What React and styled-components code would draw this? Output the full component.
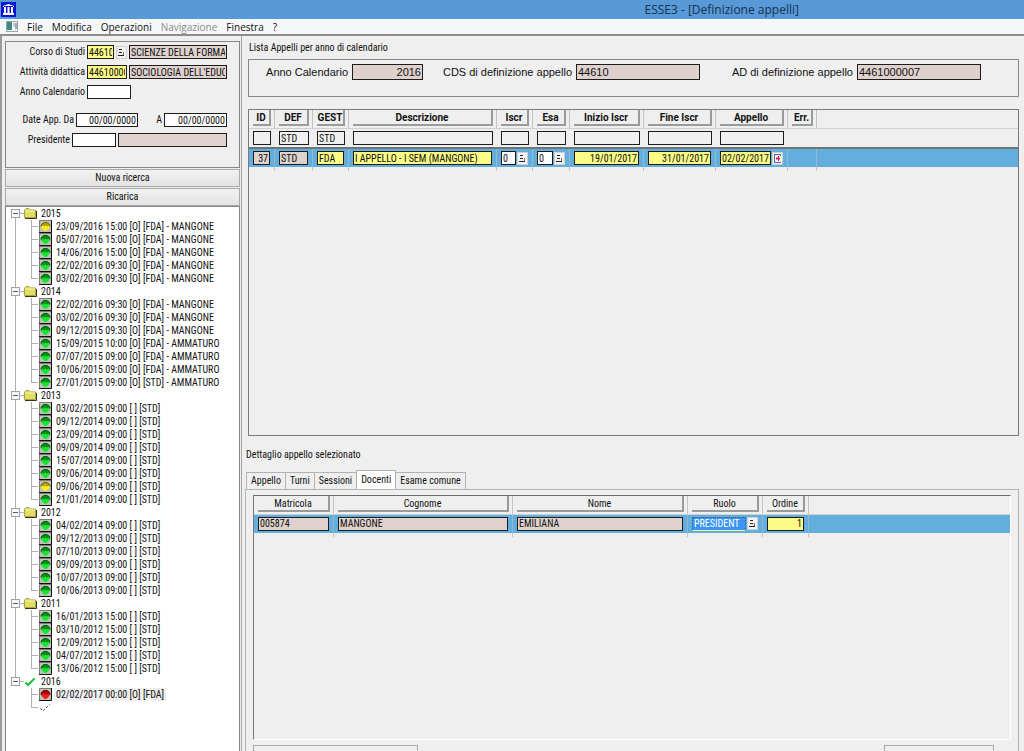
import React from "react";
import styled, { createGlobalStyle, css } from "styled-components";

const GlobalStyle = createGlobalStyle`
  * {
    box-sizing: border-box;
  }
  body {
    margin: 0;
    background: #efefef;
    color: #111;
    font-family: "Roboto Condensed", "Liberation Sans", sans-serif;
    font-size: 10px;
  }
  input, button {
    font: inherit;
    color: inherit;
    border-radius: 0;
    outline: none;
  }
`;

// DATA
const menu = ["File", "Modifica", "Operazioni", "Navigazione", "Finestra", "?"];

const M = " - MANGONE";
const A = " - AMMATURO";
const tree = [
  { year: "2015", icon: "folder", items: [
    ["yellow", "23/09/2016 15:00 [O] [FDA]" + M],
    ["green", "05/07/2016 15:00 [O] [FDA]" + M],
    ["green", "14/06/2016 15:00 [O] [FDA]" + M],
    ["green", "22/02/2016 09:30 [O] [FDA]" + M],
    ["green", "03/02/2016 09:30 [O] [FDA]" + M],
  ] },
  { year: "2014", icon: "folder", items: [
    ["green", "22/02/2016 09:30 [O] [FDA]" + M],
    ["green", "03/02/2016 09:30 [O] [FDA]" + M],
    ["green", "09/12/2015 09:30 [O] [FDA]" + M],
    ["green", "15/09/2015 10:00 [O] [FDA]" + A],
    ["green", "07/07/2015 09:00 [O] [FDA]" + A],
    ["green", "10/06/2015 09:00 [O] [FDA]" + A],
    ["green", "27/01/2015 09:00 [O] [STD]" + A],
  ] },
  { year: "2013", icon: "folder", items: [
    ["green", "03/02/2015 09:00 [ ] [STD]"],
    ["green", "09/12/2014 09:00 [ ] [STD]"],
    ["green", "23/09/2014 09:00 [ ] [STD]"],
    ["green", "09/09/2014 09:00 [ ] [STD]"],
    ["green", "15/07/2014 09:00 [ ] [STD]"],
    ["green", "09/06/2014 09:00 [ ] [STD]"],
    ["yellow", "09/06/2014 09:00 [ ] [STD]"],
    ["green", "21/01/2014 09:00 [ ] [STD]"],
  ] },
  { year: "2012", icon: "folder", items: [
    ["green", "04/02/2014 09:00 [ ] [STD]"],
    ["green", "09/12/2013 09:00 [ ] [STD]"],
    ["green", "07/10/2013 09:00 [ ] [STD]"],
    ["green", "09/09/2013 09:00 [ ] [STD]"],
    ["green", "10/07/2013 09:00 [ ] [STD]"],
    ["green", "10/06/2013 09:00 [ ] [STD]"],
  ] },
  { year: "2011", icon: "folder", items: [
    ["green", "16/01/2013 15:00 [ ] [STD]"],
    ["green", "03/10/2012 15:00 [ ] [STD]"],
    ["green", "12/09/2012 15:00 [ ] [STD]"],
    ["green", "04/07/2012 15:00 [ ] [STD]"],
    ["green", "13/06/2012 15:00 [ ] [STD]"],
  ] },
  { year: "2016", icon: "check", items: [
    ["red", "02/02/2017 00:00 [O] [FDA]", true],
    ["draft", ""],
  ] },
];

const appelliCols = [
  { name: "ID", w: 26, value: "37", tone: "rose", right: true, filter: "" },
  { name: "DEF", w: 38, value: "STD", tone: "rose", filter: "STD" },
  { name: "GEST", w: 36, value: "FDA", tone: "yellow", filter: "STD" },
  { name: "Descrizione", w: 148, value: "I APPELLO - I SEM (MANGONE)", tone: "yellow", filter: "" },
  { name: "Iscr", w: 36, value: "0", tone: "white", pick: "list", filter: "" },
  { name: "Esa", w: 37, value: "0", tone: "white", pick: "list", filter: "" },
  { name: "Inizio Iscr", w: 74, value: "19/01/2017", tone: "yellow", right: true, filter: "" },
  { name: "Fine Iscr", w: 72, value: "31/01/2017", tone: "yellow", right: true, filter: "" },
  { name: "Appello", w: 72, value: "02/02/2017", tone: "yellow", pick: "date", filter: "" },
  { name: "Err.", w: 29 },
];

const docentiCols = [
  { name: "Matricola", w: 80, value: "005874", tone: "rose" },
  { name: "Cognome", w: 179, value: "MANGONE", tone: "rose" },
  { name: "Nome", w: 175, value: "EMILIANA", tone: "rose" },
  { name: "Ruolo", w: 75, value: "PRESIDENT", tone: "selected", pick: "list" },
  { name: "Ordine", w: 46, value: "1", tone: "yellow", right: true },
];

const tabs = ["Appello", "Turni", "Sessioni", "Docenti", "Esame comune"];

// ICONS
const AppIcon = () => (
  <svg width="15" height="15" viewBox="0 0 15 15" aria-hidden="true">
    <rect width="15" height="15" fill="#0a14d8" />
    <path d="M2 5V4l5.500-2L13 4v1zM3 5h2v6H3zM6.500 5h2v6h-2zM10 5h2v6h-2zM2 11h11v2H2z" fill="#fff" />
    <path d="M3 4.500h9" stroke="#0a14d8" />
  </svg>
);

const WindowIcon = () => (
  <svg width="12" height="11" viewBox="0 0 12 11" aria-hidden="true">
    <rect x=".5" y=".5" width="11" height="10" fill="#f8fafa" stroke="#9aa6aa" />
    <rect x="1" y="1" width="5" height="8" fill="#3d8c84" />
    <path d="M7 3h2M7 5h2" stroke="#8ab" />
    <path d="M10 2v6" stroke="#456" />
  </svg>
);

const FolderIcon = () => (
  <svg width="13" height="11" viewBox="0 0 13 11" aria-hidden="true">
    <path d="M.5 9.500V2L2 .5h3L6.500 2h5v7.500z" fill="#e2de62" stroke="#a8a348" />
    <path d="M1.500 3h9.500" stroke="#f6f4b4" />
    <path d="M1 10.500h11.500V3" stroke="#33331a" fill="none" />
  </svg>
);

const balls = {
  green: ["#14e62e", "#0c8a1c", "#064d0e"],
  yellow: ["#ffec1c", "#b39f10", "#5c5206"],
  red: ["#f41a1a", "#a80c0c", "#560404"],
};

const BallIcon = ({ color }) => (
  <svg width="13" height="13" viewBox="0 0 13 13" aria-hidden="true">
    <rect width="13" height="13" fill="#c0c0b8" />
    <path d="M0 12.500h12.500V0" stroke="#111" fill="none" />
    <path d="M.5 12V.5H12" stroke="#7c7c76" fill="none" />
    <path d="M2 6a4.500 4 0 0 1 9 0v1L8 10.500 6.500 11 5 10.500 2 7z" fill={balls[color][0]} />
    <path d="M2 6.500a4.500 4 0 0 1 9 0L9.500 5.500 8 6.500 6.500 5.500 5 6.500 3.500 5.500z" fill={balls[color][1]} />
    <path d="M2 6.500a4.500 4 0 0 1 9 0" stroke={balls[color][2]} fill="none" />
  </svg>
);

const CheckIcon = ({ draft }) => (
  <svg width="13" height="11" viewBox="0 0 13 11" aria-hidden="true">
    <path
      d="M1.500 6.500L4 9l2.500-2.500L10.500 2.500"
      fill="none"
      stroke={draft ? "#222" : "#16c832"}
      strokeWidth={draft ? 1 : 2}
      strokeDasharray={draft ? "2 2" : "none"}
    />
  </svg>
);

const MinusIcon = () => (
  <svg width="9" height="9" viewBox="0 0 9 9" aria-hidden="true">
    <rect x=".5" y=".5" width="8" height="8" fill="#fafafa" stroke="#a0a0a0" />
    <path d="M2 4.500h5" stroke="#4a5a9a" />
  </svg>
);

const ListIcon = () => (
  <svg width="9" height="11" viewBox="0 0 9 11" aria-hidden="true">
    <path d="M2 2.500h3M2 5.500h3M1 8.500h6" stroke="#222" />
    <path d="M6.500 5v3" stroke="#777" />
  </svg>
);

const DateIcon = () => (
  <svg width="9" height="11" viewBox="0 0 9 11" aria-hidden="true">
    <path d="M1.500 1v9M1 1.500h7M1 9.500h7M7.500 1v2" stroke="#5c62b0" fill="none" />
    <path d="M3 5.500h4" stroke="#d02c40" strokeWidth="2" />
    <path d="M5.500 3v5" stroke="#d02c40" />
  </svg>
);

// PARTS
const Picker = ({ kind, label }) => (
  <PickButton type="button" aria-label={label}>
    {kind === "date" ? <DateIcon /> : <ListIcon />}
  </PickButton>
);

const Group = ({ year, icon, items, last }) => (
  <li>
    <TreeRow>
      <Expander type="button" aria-label={"Chiudi " + year} $first={year === "2015"} $last={last}>
        <MinusIcon />
      </Expander>
      <Dash />
      {icon === "folder" ? <FolderIcon /> : <CheckIcon />}
      <YearName>{year}</YearName>
    </TreeRow>
    <TreeList>
      {items.map(([color, text, active], i) => (
        <TreeRow key={i}>
          <RootGuide $hidden={last} />
          <Branch $end={i === items.length - 1} />
          {color === "draft" ? <CheckIcon draft /> : <BallIcon color={color} />}
          <ItemName $active={active}>{text}</ItemName>
        </TreeRow>
      ))}
    </TreeList>
  </li>
);

const DataGrid = ({ cols, filters, bold, label }) => (
  <Grid aria-label={label}>
    <colgroup>
      {cols.map((c) => <Col key={c.name} $w={c.w} />)}
      <col />
    </colgroup>
    <thead>
      <tr>
        {cols.map((c) => (
          <HeadCell key={c.name} $bold={bold}><HeadLabel>{c.name}</HeadLabel></HeadCell>
        ))}
        <HeadCell as="td" $blank />
      </tr>
      {filters && (
        <tr>
          {cols.map((c) => (
            <FilterCell key={c.name}>
              {c.filter !== undefined && (
                <Field $tone="plain" defaultValue={c.filter} aria-label={"Filtro " + c.name} />
              )}
            </FilterCell>
          ))}
          <FilterCell />
        </tr>
      )}
    </thead>
    <tbody>
      <tr>
        {cols.map((c) => (
          <BodyCell key={c.name}>
            {c.value && (
              <CellBox>
                <Field $tone={c.tone} $right={c.right} defaultValue={c.value} aria-label={c.name} />
                {c.pick && <Picker kind={c.pick} label={"Scegli " + c.name} />}
              </CellBox>
            )}
          </BodyCell>
        ))}
        <BodyCell $blank />
      </tr>
      <tr>
        {cols.map((c) => <TailCell key={c.name} />)}
        <td />
      </tr>
    </tbody>
  </Grid>
);

export default function App() {
  const [tab, setTab] = React.useState("Docenti");

  return (
    <Window>
      <GlobalStyle />
      <TitleBar>
        <AppIcon />
        <Title>ESSE3 - [Definizione appelli]</Title>
      </TitleBar>
      <MenuBar>
        <WindowIcon />
        {menu.map((m) => (
          <MenuItem key={m} type="button" disabled={m === "Navigazione"}>{m}</MenuItem>
        ))}
      </MenuBar>

      <Workspace>
        <Sidebar>
          <SearchForm>
            <FormGroup>
              <FormRow>
                <FormLabel htmlFor="corso" $w={78}>Corso di Studi</FormLabel>
                <Field id="corso" $tone="yellow" $w={27} defaultValue="44610" />
                <Picker kind="list" label="Scegli corso" />
                <Field $tone="rose" readOnly value="SCIENZE DELLA FORMAZIONE" aria-label="Nome corso" />
              </FormRow>
              <FormRow>
                <FormLabel htmlFor="attivita" $w={78}>Attività didattica</FormLabel>
                <Field id="attivita" $tone="yellow" $w={40} defaultValue="4461000007" />
                <Field $tone="rose" readOnly value="SOCIOLOGIA DELL'EDUCAZIONE" aria-label="Nome attività" />
              </FormRow>
              <FormRow>
                <FormLabel htmlFor="anno" $w={78}>Anno Calendario</FormLabel>
                <Field id="anno" $tone="white" $w={44} />
              </FormRow>
            </FormGroup>
            <FormGroup>
              <FormRow>
                <FormLabel htmlFor="da" $w={67}>Date App. Da</FormLabel>
                <Field id="da" $tone="white" $w={62} $right defaultValue="00/00/0000" />
                <FormLabel htmlFor="al" $w={22}>A</FormLabel>
                <Field id="al" $tone="white" $right defaultValue="00/00/0000" />
              </FormRow>
              <FormRow>
                <FormLabel htmlFor="presidente" $w={63}>Presidente</FormLabel>
                <Field id="presidente" $tone="white" $w={44} />
                <Field $tone="rose" readOnly aria-label="Nome presidente" />
              </FormRow>
            </FormGroup>
          </SearchForm>
          <WideButton type="button">Nuova ricerca</WideButton>
          <WideButton type="button">Ricarica</WideButton>
          <TreePanel>
            <TreeList>
              {tree.map((g, i) => <Group key={g.year} {...g} last={i === tree.length - 1} />)}
            </TreeList>
          </TreePanel>
        </Sidebar>

        <Main>
          <Upper>
            <Caption>Lista Appelli per anno di calendario</Caption>
            <Summary>
              <SummaryLabel htmlFor="s-anno" $w={101}>Anno Calendario</SummaryLabel>
              <SummaryField id="s-anno" $w={71} $right readOnly value="2016" />
              <SummaryLabel htmlFor="s-cds" $w={149}>CDS di definizione appello</SummaryLabel>
              <SummaryField id="s-cds" $w={124} readOnly value="44610" />
              <SummaryLabel htmlFor="s-ad" $w={153}>AD di definizione appello</SummaryLabel>
              <SummaryField id="s-ad" $w={124} readOnly value="4461000007" />
            </Summary>
            <GridBox>
              <DataGrid cols={appelliCols} filters bold label="Lista appelli" />
            </GridBox>
          </Upper>

          <Lower>
            <Caption>Dettaglio appello selezionato</Caption>
            <TabList role="tablist">
              {tabs.map((t) => (
                <Tab key={t} type="button" role="tab" aria-selected={t === tab} $active={t === tab} onClick={() => setTab(t)}>
                  {t}
                </Tab>
              ))}
            </TabList>
            <TabPanel role="tabpanel">
              <DetailBox>
                <DataGrid cols={docentiCols} label="Docenti" />
              </DetailBox>
              <Footer>
                <FooterBox $w={165} />
                <FooterBox $w={110} />
              </Footer>
            </TabPanel>
          </Lower>
        </Main>
      </Workspace>
    </Window>
  );
}

// ______________________________________ STYLED COMPONENTS
const tones = {
  rose: "#ded1ce",
  yellow: "#fbfb86",
  white: "#fff",
  plain: "#f0f0f0",
  selected: "#3b95f2",
};

const Window = styled.div`
  display: flex;
  flex-direction: column;
  height: 100vh;
  overflow: hidden;
`

const TitleBar = styled.header`
  display: flex;
  align-items: center;
  justify-content: space-between;
  height: 19px;
  padding-left: 1px;
  background: #5899d8;
`

const Title = styled.h1`
  margin: 0 22% 0 0;
  font: 400 12px/18px "Open Sans", sans-serif;
  color: #17324e;
`

const MenuBar = styled.nav`
  display: flex;
  align-items: center;
  gap: 9px;
  height: 17px;
  padding-left: 6px;
  background: #f6f7f9;
  border-bottom: 2px solid #8c8c8c;
`

const MenuItem = styled.button`
  padding: 0;
  border: 0;
  background: none;
  font: 10px/14px "Open Sans", sans-serif;
  color: #111;
  &:disabled {
    color: #8b8b8b;
  }
`

const Workspace = styled.div`
  display: flex;
  flex: 1;
  min-height: 0;
  border-left: 2px solid #9c9c9c;
`

const Sidebar = styled.aside`
  display: flex;
  flex-direction: column;
  flex: none;
  width: 240px;
  padding: 5px 1px 0 3px;
  border-right: 1px solid #a4a4a4;
`

const SearchForm = styled.form`
  display: flex;
  flex-direction: column;
  gap: 14px;
  height: 127px;
  padding: 3px 12px 0 1px;
  border: 1px solid #868686;
`

const FormGroup = styled.div`
  display: flex;
  flex-direction: column;
  gap: 6px;
`

const FormRow = styled.div`
  display: flex;
  align-items: center;
  gap: 2px;
  height: 14px;
`

const FormLabel = styled.label`
  flex: none;
  width: ${(p) => p.$w}px;
  line-height: 14px;
  text-align: right;
  white-space: nowrap;
`

const Field = styled.input`
  flex: ${(p) => (p.$w ? "none" : "1")};
  width: ${(p) => (p.$w ? p.$w + "px" : "100%")};
  min-width: 0;
  height: 14px;
  margin: 0;
  padding: 0 1px;
  border: 1px solid #1c1c1c;
  background: ${(p) => tones[p.$tone]};
  line-height: 12px;
  text-align: ${(p) => (p.$right ? "right" : "left")};
  ${(p) => p.$tone === "selected" && css`
    color: #fff;
    border: 1px dotted #3c5f80;
    border-bottom: 1px solid #f4f48c;
  `}
`

const PickButton = styled.button`
  display: flex;
  align-items: center;
  justify-content: center;
  flex: none;
  width: 11px;
  height: 13px;
  padding: 0;
  border: 1px solid #cfcfcf;
  background: #f3f3f3;
`

const WideButton = styled.button`
  flex: none;
  height: 18px;
  margin-top: 1px;
  padding: 0;
  border: 1px solid #a9a9a9;
  background: linear-gradient(#f2f2f2, #e3e3e3);
  line-height: 16px;
`

const TreePanel = styled.div`
  flex: 1;
  min-height: 0;
  overflow: hidden;
  padding-left: 5px;
  border: 1px solid #868686;
  border-bottom: 0;
  background: #fff;
`

const TreeList = styled.ul`
  margin: 0;
  padding: 0;
  list-style: none;
`

const TreeRow = styled.div`
  display: flex;
  align-items: center;
  height: 13px;
  line-height: 13px;
  white-space: nowrap;
`

const line = "linear-gradient(#b0b0b0, #b0b0b0) no-repeat";

const Expander = styled.button`
  display: flex;
  align-items: center;
  width: 9px;
  height: 13px;
  padding: 0;
  border: 0;
  background: ${line} 4px ${(p) => (p.$first ? "100%" : "0")} / 1px ${(p) => (p.$first || p.$last ? "50%" : "100%")};
`

const Dash = styled.span`
  width: 4px;
  height: 1px;
  background: #b0b0b0;
`

const RootGuide = styled.span`
  width: 20px;
  height: 13px;
  background: ${(p) => (p.$hidden ? "none" : css`${line} 4px 0 / 1px 100%`)};
`

const Branch = styled.span`
  width: 8px;
  height: 13px;
  background:
    ${line} 0 0 / 1px ${(p) => (p.$end ? "50%" : "100%")},
    ${line} 0 6px / 7px 1px;
`

const YearName = styled.span`
  padding-left: 4px;
`

const ItemName = styled.span`
  margin-left: 2px;
  padding: 0 2px;
  background: ${(p) => (p.$active ? "#f0f0f0" : "none")};
`

const Main = styled.main`
  display: flex;
  flex-direction: column;
  flex: 1;
  min-width: 0;
  padding: 5px 5px 0 3px;
`

const Upper = styled.section`
  display: flex;
  flex-direction: column;
  flex: 402 1 0;
  min-height: 0;
  padding-left: 3px;
`

const Lower = styled.section`
  display: flex;
  flex-direction: column;
  flex: 309 1 0;
  min-height: 0;
  padding-top: 12px;
`

const Caption = styled.h2`
  margin: 0;
  padding-left: 1px;
  font-size: 10px;
  font-weight: 400;
  line-height: 14px;
`

const Summary = styled.div`
  display: flex;
  align-items: flex-start;
  gap: 2px;
  height: 38px;
  margin: 4px 0 12px;
  padding-top: 4px;
  border: 1px solid #868686;
`

const SummaryLabel = styled.label`
  flex: none;
  width: ${(p) => p.$w}px;
  padding-right: 2px;
  font: 11px/16px "Liberation Sans", sans-serif;
  text-align: right;
  white-space: nowrap;
`

const SummaryField = styled(Field)`
  height: 16px;
  background: ${tones.rose};
  font: 11px/14px "Liberation Sans", sans-serif;
`

const GridBox = styled.div`
  flex: 1;
  min-height: 0;
  overflow: hidden;
  border: 1px solid #7a7a7a;
`

const Grid = styled.table`
  width: 100%;
  table-layout: fixed;
  border-collapse: separate;
  border-spacing: 0;
`

const Col = styled.col`
  width: ${(p) => p.$w}px;
`

const HeadCell = styled.th`
  height: 19px;
  padding: 0 3px 2px 4px;
  border-right: ${(p) => (p.$blank ? "0" : "1px solid #c4c4c4")};
  border-bottom: 1px solid #d0d0d0;
  font-family: ${(p) => (p.$bold ? "Roboto, sans-serif" : "inherit")};
  font-weight: ${(p) => (p.$bold ? 700 : 400)};
`

const HeadLabel = styled.div`
  height: 16px;
  border-right: 2px solid #9a9a9a;
  border-bottom: 2px solid #9a9a9a;
  line-height: 16px;
  text-align: center;
  white-space: nowrap;
`

const FilterCell = styled.td`
  height: 20px;
  padding: 2px 4px;
  border-bottom: 2px solid #6f7477;
  line-height: 0;
`

const BodyCell = styled.td`
  height: 18px;
  padding: 0 4px;
  border-right: ${(p) => (p.$blank ? "0" : "1px solid #92b8d4")};
  background: #64aede;
  line-height: 0;
`

const TailCell = styled.td`
  height: 4px;
  padding: 0;
  border-right: 1px solid #c4c4c4;
`

const CellBox = styled.div`
  display: flex;
  align-items: center;
  gap: 1px;
`

const TabList = styled.div`
  display: flex;
  align-items: flex-end;
  height: 19px;
  margin-top: 8px;
  padding-left: 2px;
`

const Tab = styled.button`
  height: ${(p) => (p.$active ? 19 : 17)}px;
  padding: 0 4px;
  border: 1px solid #b2b2b2;
  border-bottom: 0;
  margin-left: -1px;
  background: ${(p) => (p.$active ? "#fff" : "#efefef")};
  line-height: 14px;
`

const TabPanel = styled.div`
  display: flex;
  flex-direction: column;
  flex: 1;
  min-height: 0;
  padding: 5px 7px 0;
  border: 1px solid #b2b2b2;
  border-bottom: 0;
`

const DetailBox = styled.div`
  flex: 1;
  min-height: 0;
  overflow: hidden;
  border-top: 1px solid #6a6a6a;
  border-left: 1px solid #7a7a7a;
  border-right: 1px solid #fff;
  border-bottom: 1px solid #fff;
`

const Footer = styled.div`
  display: flex;
  justify-content: space-between;
  padding: 5px 17px 0 0;
`

const FooterBox = styled.div`
  width: ${(p) => p.$w}px;
  height: 6px;
  border: 1px solid #a9a9a9;
  border-bottom: 0;
`
